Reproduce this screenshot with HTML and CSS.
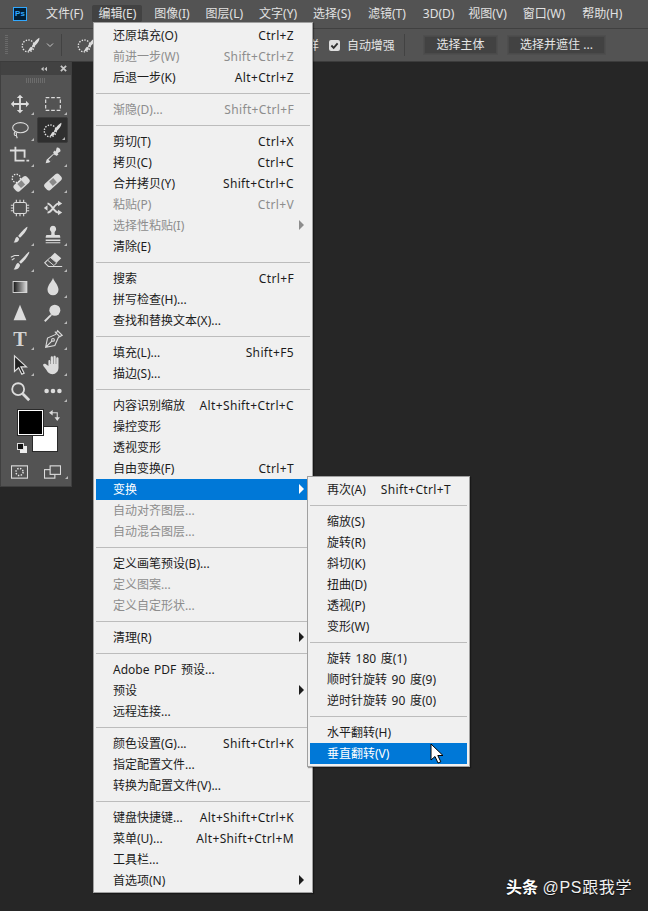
FILE: index.html
```html
<!DOCTYPE html>
<html lang="zh">
<head>
<meta charset="utf-8">
<title>Photoshop 编辑菜单</title>
<link rel="stylesheet" href="styles.css">
</head>
<body>
<div class="app">
  <header class="menubar">
    <div class="ps-logo">Ps</div>
    <nav class="menus">
      <span class="m m-file">文件(F)</span>
      <span class="m m-edit active">编辑(E)</span>
      <span class="m m-image">图像(I)</span>
      <span class="m m-layer">图层(L)</span>
      <span class="m m-type">文字(Y)</span>
      <span class="m m-sel">选择(S)</span>
      <span class="m m-filter">滤镜(T)</span>
      <span class="m m-3d">3D(D)</span>
      <span class="m m-view">视图(V)</span>
      <span class="m m-win">窗口(W)</span>
      <span class="m m-help">帮助(H)</span>
    </nav>
  </header>

  <div class="optionsbar">
    <div class="opt-left">
      <span class="grip"></span>
      <svg class="opt-brush" viewBox="0 0 24 24"><circle cx="9" cy="13" r="6.5" class="dots"/><path class="fill" d="M21 4c1 2-2 7-6 10-1 1-2 0-2-1 2-4 6-8 8-9zM12 14c1 0 2 1 2 2-1 2-3 3-6 3 2-1 2-4 4-5z"/></svg>
      <svg class="opt-chev" viewBox="0 0 10 10"><path d="M2 3.5l3 3 3-3"/></svg>
      <span class="opt-sep"></span>
      <svg class="opt-brush opt-brush-2" viewBox="0 0 24 24"><circle cx="9" cy="13" r="6.5" class="dots"/><path class="fill" d="M21 4c1 2-2 7-6 10-1 1-2 0-2-1 2-4 6-8 8-9zM12 14c1 0 2 1 2 2-1 2-3 3-6 3 2-1 2-4 4-5z"/></svg>
    </div>
    <div class="opt-right">
      <span class="opt-text opt-clip">样</span>
      <span class="check"><svg viewBox="0 0 12 12"><path d="M2.6 6l2.5 2.6 4.3-5"/></svg></span>
      <span class="opt-text opt-label">自动增强</span>
      <span class="opt-sep opt-sep-r"></span>
      <button class="opt-btn btn-a">选择主体</button>
      <button class="opt-btn btn-b">选择并遮住 ...</button>
    </div>
  </div>

  <aside class="toolpanel">
    <div class="panel-head">
      <svg viewBox="0 0 10 8" class="collapse"><path d="M4.5 1L1 4l3.500 3zM9 1L5.500 4 9 7z"/></svg>
      <svg viewBox="0 0 8 8" class="closex"><path d="M1 1l6 6M7 1L1 7"/></svg>
    </div>
    <div class="panel-grip"></div>
    <div class="tools">
      <div class="tool more"><svg viewBox="0 0 24 24"><path class="fill" d="M12 2l3.500 3.500h-2.500v5.500h5.500V8.500L22 12l-3.500 3.500V13H13v5.500h2.500L12 22l-3.500-3.500H11V13H5.500v2.500L2 12l3.500-3.500V11H11V5.500H8.500z"/></svg></div>
      <div class="tool more"><svg viewBox="0 0 24 24"><rect x="4" y="5" width="16" height="14" class="line dash"/></svg></div>

      <div class="tool more"><svg viewBox="0 0 24 24"><ellipse cx="12.500" cy="9.500" rx="8.500" ry="5.500" class="line"/><path class="line" d="M7 14c-2 1-1.500 4 0 4s1.500-2 .5-3M8 18l1 3"/></svg></div>
      <div class="tool more selected"><svg viewBox="0 0 24 24"><circle cx="9" cy="13" r="6.500" class="dots"/><path class="fill" d="M21 4c1 2-2 7-6 10-1 1-2 0-2-1 2-4 6-8 8-9zM12 14c1 0 2 1 2 2-1 2-3 3-6 3 2-1 2-4 4-5z"/></svg></div>

      <div class="tool more"><svg viewBox="0 0 24 24"><path class="line thick" d="M1 6h5M7 2v15h10M7 6h10v8M19 17h3"/></svg></div>
      <div class="tool more"><svg viewBox="0 0 24 24"><path class="fill" d="M16 3c2-1 5 2 4 4l-3 2 1 1-2 2-1-1-7 8-4 1 1-4 8-7-1-1 2-2 1 1z"/><path class="cut" d="M7 16l6-6 2 2-6 6z"/></svg></div>

      <div class="tool more"><svg viewBox="0 0 24 24"><g transform="rotate(-42 13 14)"><rect x="4" y="10" width="19" height="9" rx="3" class="fill"/><rect x="10" y="11.500" width="6" height="6" class="cut dk"/></g><circle cx="8" cy="8" r="4.500" class="dots"/></svg></div>
      <div class="tool more"><svg viewBox="0 0 24 24"><g transform="rotate(-42 12 12)"><rect x="1.500" y="7.500" width="21" height="9" rx="3" class="fill"/><rect x="9" y="9" width="6" height="6" class="cut dk"/></g></svg></div>

      <div class="tool"><svg viewBox="0 0 24 24"><rect x="5" y="6" width="14" height="12" rx="2" class="line"/><path class="line" d="M8 3v3M12 3v3M16 3v3M8 18v3M12 18v3M16 18v3M2 9h3M2 12h3M2 15h3M19 9h3M19 12h3M19 15h3"/></svg></div>
      <div class="tool"><svg viewBox="0 0 24 24"><path class="line thick" d="M6 7c5 1 7 10 12 10M6 17c5 0 7-9 12-10"/><path class="fill" d="M22 7l-4.500 3V4zM22 17l-4.500 3v-6zM2 12l4-3v6z"/></svg></div>

      <div class="tool more"><svg viewBox="0 0 24 24"><path class="fill" d="M20 3c1 1-3 8-8 12l-2-2C14 8 19 3 20 3zM9 14l2 2c0 3-3 5-6 4 2-1 1-5 4-6z"/></svg></div>
      <div class="tool more"><svg viewBox="0 0 24 24"><path class="fill" d="M12 2a3.500 3.500 0 0 1 2.200 6.200c-.4.400-.7 2-.2 3.800h5c1 0 1 3 1 3H4s0-3 1-3h5c.5-1.800.2-3.400-.2-3.800A3.500 3.500 0 0 1 12 2zM4 17h16v1.500H4zM4 20h16v1H4z"/></svg></div>

      <div class="tool more"><svg viewBox="0 0 24 24"><path class="fill" d="M22 2c1 1-4 9-9 13l-2-2C16 8 21 2 22 2zM10 14l2 2c0 3-3 6-7 5 2-1 2-6 5-7z"/><path class="line" d="M2 8l4-2 5 0M3 11l3-2"/></svg></div>
      <div class="tool more"><svg viewBox="0 0 24 24"><path class="fill" d="M14 3l7 6-8 8-7-6z"/><path class="cut2" d="M9 8l7 6-3 3-7-6z"/><path class="line" d="M6 11l-3 3 4 4h15"/></svg></div>

      <div class="tool"><svg viewBox="0 0 24 24"><defs><linearGradient id="g1"><stop offset="0" stop-color="#111"/><stop offset="1" stop-color="#ddd"/></linearGradient></defs><rect x="4.500" y="6" width="15" height="12" fill="url(#g1)" class="gframe"/></svg></div>
      <div class="tool more"><svg viewBox="0 0 24 24"><path class="fill" d="M12 2c1 4 6 8 6 13a6 6 0 0 1-12 0c0-5 5-9 6-13z"/></svg></div>

      <div class="tool"><svg viewBox="0 0 24 24"><path class="fill" d="M12 3l7 17H5z"/></svg></div>
      <div class="tool more"><svg viewBox="0 0 24 24"><circle cx="14" cy="9" r="6" class="fill"/><path class="line thick" d="M10 14l-7 7"/></svg></div>

      <div class="tool more"><svg viewBox="0 0 24 24"><text x="12" y="20" class="t-glyph">T</text></svg></div>
      <div class="tool more"><svg viewBox="0 0 24 24"><path class="line" d="M17 3l5 5-4 2-4 9-10 2 2-10 9-4zM4 21l7-7"/><circle cx="12" cy="13" r="1.500" class="line"/><path class="line" d="M14 4l6 6"/></svg></div>

      <div class="tool more"><svg viewBox="0 0 24 24"><path class="arrow" d="M6 2l13 12h-6l3.500 7-2.500 1-3.500-7L6 19z"/></svg></div>
      <div class="tool more"><svg viewBox="0 0 24 24"><path class="fill" d="M7 8c0-2 2-2 2 0v3h.5V4c0-2 2.500-2 2.500 0v7h.5V3.500c0-2 2.500-2 2.500 0V11h.5V5c0-2 2.500-2 2.500 0v10c0 4-3 7-6.500 7-4 0-5-2-7-5l-3-4c-1-2 1-3 2.500-2L7 13z"/></svg></div>

      <div class="tool"><svg viewBox="0 0 24 24"><circle cx="10" cy="10" r="6.500" class="line thick"/><path class="line thick3" d="M15 15l7 7"/></svg></div>
      <div class="tool more"><svg viewBox="0 0 24 24"><circle cx="5" cy="12" r="2.500" class="fill"/><circle cx="12" cy="12" r="2.500" class="fill"/><circle cx="19" cy="12" r="2.500" class="fill"/></svg></div>
    </div>

    <div class="colors">
      <span class="swatch bg"></span>
      <span class="swatch fg"></span>
      <svg class="swap" viewBox="0 0 12 12"><path class="line" d="M2 3h7v6"/><path class="fill" d="M4 0v6L0 3zM6 8h6l-3 4z"/></svg>
      <span class="mini mini-bg"></span>
      <span class="mini mini-fg"></span>
    </div>

    <div class="panel-foot">
      <div class="foot-tool"><svg viewBox="0 0 18 14"><rect x=".5" y=".5" width="17" height="13" class="line"/><circle cx="9" cy="7" r="3.800" class="dots"/></svg></div>
      <div class="foot-tool more-foot"><svg viewBox="0 0 18 14"><rect x=".5" y="4.500" width="11" height="9" class="line"/><rect x="6.500" y=".5" width="11" height="9" class="line solid"/></svg></div>
    </div>
  </aside>

  <div class="menu edit-menu">
    <div class="item"><span>还原填充(O)</span><span class="key">Ctrl+Z</span></div>
    <div class="item off"><span>前进一步(W)</span><span class="key">Shift+Ctrl+Z</span></div>
    <div class="item"><span>后退一步(K)</span><span class="key">Alt+Ctrl+Z</span></div>
    <div class="sep"></div>
    <div class="item off"><span>渐隐(D)...</span><span class="key">Shift+Ctrl+F</span></div>
    <div class="sep"></div>
    <div class="item"><span>剪切(T)</span><span class="key">Ctrl+X</span></div>
    <div class="item"><span>拷贝(C)</span><span class="key">Ctrl+C</span></div>
    <div class="item"><span>合并拷贝(Y)</span><span class="key">Shift+Ctrl+C</span></div>
    <div class="item off"><span>粘贴(P)</span><span class="key">Ctrl+V</span></div>
    <div class="item off sub"><span>选择性粘贴(I)</span></div>
    <div class="item"><span>清除(E)</span></div>
    <div class="sep"></div>
    <div class="item"><span>搜索</span><span class="key">Ctrl+F</span></div>
    <div class="item"><span>拼写检查(H)...</span></div>
    <div class="item"><span>查找和替换文本(X)...</span></div>
    <div class="sep"></div>
    <div class="item"><span>填充(L)...</span><span class="key">Shift+F5</span></div>
    <div class="item"><span>描边(S)...</span></div>
    <div class="sep"></div>
    <div class="item"><span>内容识别缩放</span><span class="key">Alt+Shift+Ctrl+C</span></div>
    <div class="item"><span>操控变形</span></div>
    <div class="item"><span>透视变形</span></div>
    <div class="item"><span>自由变换(F)</span><span class="key">Ctrl+T</span></div>
    <div class="item sub hot"><span>变换</span></div>
    <div class="item off"><span>自动对齐图层...</span></div>
    <div class="item off"><span>自动混合图层...</span></div>
    <div class="sep"></div>
    <div class="item"><span>定义画笔预设(B)...</span></div>
    <div class="item off"><span>定义图案...</span></div>
    <div class="item off"><span>定义自定形状...</span></div>
    <div class="sep"></div>
    <div class="item sub"><span>清理(R)</span></div>
    <div class="sep"></div>
    <div class="item"><span>Adobe PDF 预设...</span></div>
    <div class="item sub"><span>预设</span></div>
    <div class="item"><span>远程连接...</span></div>
    <div class="sep"></div>
    <div class="item"><span>颜色设置(G)...</span><span class="key">Shift+Ctrl+K</span></div>
    <div class="item"><span>指定配置文件...</span></div>
    <div class="item"><span>转换为配置文件(V)...</span></div>
    <div class="sep"></div>
    <div class="item"><span>键盘快捷键...</span><span class="key">Alt+Shift+Ctrl+K</span></div>
    <div class="item"><span>菜单(U)...</span><span class="key">Alt+Shift+Ctrl+M</span></div>
    <div class="item"><span>工具栏...</span></div>
    <div class="item sub"><span>首选项(N)</span></div>
  </div>

  <div class="menu transform-menu">
    <div class="item"><span>再次(A)</span><span class="key">Shift+Ctrl+T</span></div>
    <div class="sep"></div>
    <div class="item"><span>缩放(S)</span></div>
    <div class="item"><span>旋转(R)</span></div>
    <div class="item"><span>斜切(K)</span></div>
    <div class="item"><span>扭曲(D)</span></div>
    <div class="item"><span>透视(P)</span></div>
    <div class="item"><span>变形(W)</span></div>
    <div class="sep"></div>
    <div class="item"><span>旋转 180 度(1)</span></div>
    <div class="item"><span>顺时针旋转 90 度(9)</span></div>
    <div class="item"><span>逆时针旋转 90 度(0)</span></div>
    <div class="sep"></div>
    <div class="item"><span>水平翻转(H)</span></div>
    <div class="item hot"><span>垂直翻转(V)</span></div>
  </div>

  <svg class="cursor" viewBox="0 0 14 21"><path d="M1 1v16l4-3.500 3 6.500 2.800-1.200-3-6.300H13z"/></svg>

  <div class="watermark"><b>头条</b> <span class="wm-name">@PS跟我学</span></div>
</div>
</body>
</html>
```
FILE: styles.css
```css
* { box-sizing: border-box; }
html, body { margin: 0; padding: 0; }
body { background: #262626; font-family: "Noto Sans", "Noto Sans CJK SC", sans-serif; }
.app { position: relative; width: 648px; height: 911px; overflow: hidden; background: #262626; }

.fill { fill: #dcdcdc; }
.line { fill: none; stroke: #dcdcdc; stroke-width: 1.2; }
.line.thick { stroke-width: 2; }
.line.thick3 { stroke-width: 3; }
.line.dash { stroke-dasharray: 4 2; stroke-width: 1.300; }
.line.solid { fill: #535353; }
.dots { fill: none; stroke: #e6e6e6; stroke-width: 1.500; stroke-dasharray: 1.500 1.500; }
.cut { fill: #535353; }
.cut.dk { fill: #8a8a8a; }
.cut2 { fill: #535353; stroke: #dcdcdc; stroke-width: 1; }
.gframe { stroke: #ddd; stroke-width: 1; }
.arrow { fill: #222; stroke: #ddd; stroke-width: 1.300; }
.t-glyph { font-family: "Liberation Serif", serif; font-size: 22px; font-weight: 700; fill: #d4d4d4; text-anchor: middle; }

/* Menu bar */
.menubar { height: 29px; display: flex; align-items: center; background: #535353; border-bottom: 1px solid #404040; }
.ps-logo { width: 14px; height: 14px; margin: 0 0 1px 13px; border: 1px solid #31a8ff; background: #001e36; color: #31a8ff; font: 700 8px/12px "Liberation Sans", sans-serif; text-align: center; }
.menus { display: flex; margin-left: 19px; }
.m { font-size: 12px; line-height: 17px; color: #e2e2e2; white-space: nowrap; margin-bottom: 2px; }
.m-edit { margin-left: 15px; }
.m-image { margin-left: 18px; }
.m-layer { margin-left: 16px; }
.m-type { margin-left: 16px; }
.m-sel { margin-left: 16px; }
.m-filter { margin-left: 17px; }
.m-3d { margin-left: 17px; }
.m-view { margin-left: 14px; }
.m-win { margin-left: 16px; }
.m-help { margin-left: 17px; }
.m.active { position: relative; isolation: isolate; }
.m.active::before { content: ""; position: absolute; z-index: -1; inset: 0 -6px; background: #424242; border-radius: 2px; }

/* Options bar */
.optionsbar { height: 33px; display: flex; align-items: center; justify-content: space-between; background: #535353; border-bottom: 1px solid #3c3c3c; color: #e4e4e4; }
.opt-left { display: flex; align-items: center; padding-left: 5px; }
.grip { width: 3px; height: 20px; background: repeating-linear-gradient(#6a6a6a 0 1px, transparent 1px 2px); }
.opt-brush { width: 22px; height: 22px; margin-left: 12px; }
.opt-brush-2 { margin-left: 14px; }
.opt-chev { width: 10px; height: 10px; margin-left: 3px; fill: none; stroke: #c8c8c8; }
.opt-sep { width: 1px; height: 22px; background: #424242; margin-left: 6px; }
.opt-right { display: flex; align-items: center; padding-right: 43px; }
.opt-text { font-size: 12px; white-space: nowrap; }
.opt-clip { width: 6px; overflow: hidden; display: flex; justify-content: flex-end; }
.check { width: 11px; height: 11px; margin-left: 10px; border-radius: 2px; background: #dedede; display: flex; }
.check svg { width: 11px; height: 11px; fill: none; stroke: #303030; stroke-width: 2; }
.opt-label { margin-left: 7px; width: 46px; letter-spacing: -.1px; }
.opt-sep-r { margin-left: 11px; }
.opt-btn { height: 18px; padding: 0; border: 1px solid #4a4a4a; outline: 1px solid #4e4e4e; background: #424242; color: #e6e6e6; font: 12px/16px "Noto Sans", "Noto Sans CJK SC", sans-serif; }
.btn-a { width: 73px; margin-left: 19px; }
.btn-b { width: 97px; margin-left: 11px; }

/* Tool panel */
.toolpanel { position: absolute; left: 0; top: 62px; width: 72px; height: 425px; background: #535353; border: 1px solid #3f3f3f; border-width: 0 1px 1px 1px; }
.panel-head { height: 13px; background: #424242; display: flex; align-items: center; justify-content: flex-end; gap: 12px; padding-right: 4px; }
.collapse { width: 8px; height: 6px; fill: #c8c8c8; }
.closex { width: 7px; height: 7px; stroke: #c8c8c8; stroke-width: 2; fill: none; }
.panel-grip { width: 20px; height: 5px; margin: 3px auto 0 25px; background: repeating-linear-gradient(90deg, #6c6c6c 0 1px, transparent 1px 2px); }
.tools { display: grid; grid-template-columns: 33px 33px; grid-auto-rows: 26.1px; padding: 8px 0 0 2px; }
.tool { position: relative; display: flex; align-items: center; justify-content: center; }
.tool svg { width: 22px; height: 22px; }
.more::after, .more-foot::after { content: ""; position: absolute; right: 2px; bottom: 2px; border-style: solid; border-width: 0 0 3px 3px; border-color: transparent transparent #b8b8b8 transparent; }
.tool.selected { background: #2f2f2f; border: 1px solid #3c3c3c; border-radius: 2px; margin: 0 1px; }

.colors { position: relative; height: 46px; margin-top: 6px; }
.swatch { position: absolute; display: block; }
.swatch.fg { left: 17px; top: 0; width: 25px; height: 25px; background: #000; border: 1px solid #fff; outline: 1px solid #2a2a2a; }
.swatch.bg { left: 31px; top: 16px; width: 26px; height: 26px; background: #fff; border: 1px solid #2a2a2a; }
.swap { position: absolute; left: 48px; top: 0; width: 11px; height: 11px; }
.mini { position: absolute; display: block; width: 7px; height: 7px; }
.mini-bg { left: 19px; top: 36px; background: #eee; }
.mini-fg { left: 16px; top: 33px; background: #111; border: 1px solid #ddd; }

.panel-foot { display: flex; margin-top: 9px; padding-left: 10px; gap: 16px; }
.foot-tool { position: relative; width: 17px; height: 14px; }
.foot-tool svg { width: 17px; height: 14px; display: block; }
.more-foot::after { right: -7px; bottom: 0; }

/* Menus */
.menu { position: absolute; background: #f0f0f0; border: 1px solid #a0a0a0; padding: 2px; color: #1c1c1c; font-size: 12px; box-shadow: 1px 1px 1px rgba(0,0,0,.35); }
.edit-menu { left: 93px; top: 22px; width: 220px; height: 871px; }
.transform-menu { left: 307px; top: 476px; width: 163px; height: 291px; }
.item { position: relative; height: 21px; display: flex; align-items: center; justify-content: space-between; padding: 1px 16px 0 17px; white-space: nowrap; line-height: 20px; word-spacing: 1.500px; }
.key { letter-spacing: .35px; }
.item.off { color: #8d8d8d; }
.item.hot { background: #0078d7; color: #fff; }
.sub::after { content: ""; position: absolute; right: 6px; top: 5px; border-style: solid; border-width: 5px 0 5px 5px; border-color: transparent transparent transparent #1c1c1c; }
.sub.off::after { border-left-color: #8d8d8d; }
.sub.hot::after { border-left-color: #fff; }
.sep { height: 1px; margin: 5px 0; background: #bcbcbc; }

.cursor { position: absolute; left: 430px; top: 743px; width: 14px; height: 21px; fill: #fff; stroke: #000; stroke-width: 1; }

.watermark { position: absolute; left: 506px; top: 877px; font: 16px/22px "Liberation Sans", "Noto Sans CJK SC", sans-serif; color: #f0f0f0; text-shadow: 0 1px 1px rgba(0,0,0,.6); white-space: nowrap; }
.watermark b { font-weight: 700; color: #fff; }
.wm-name { letter-spacing: .7px; }
```
